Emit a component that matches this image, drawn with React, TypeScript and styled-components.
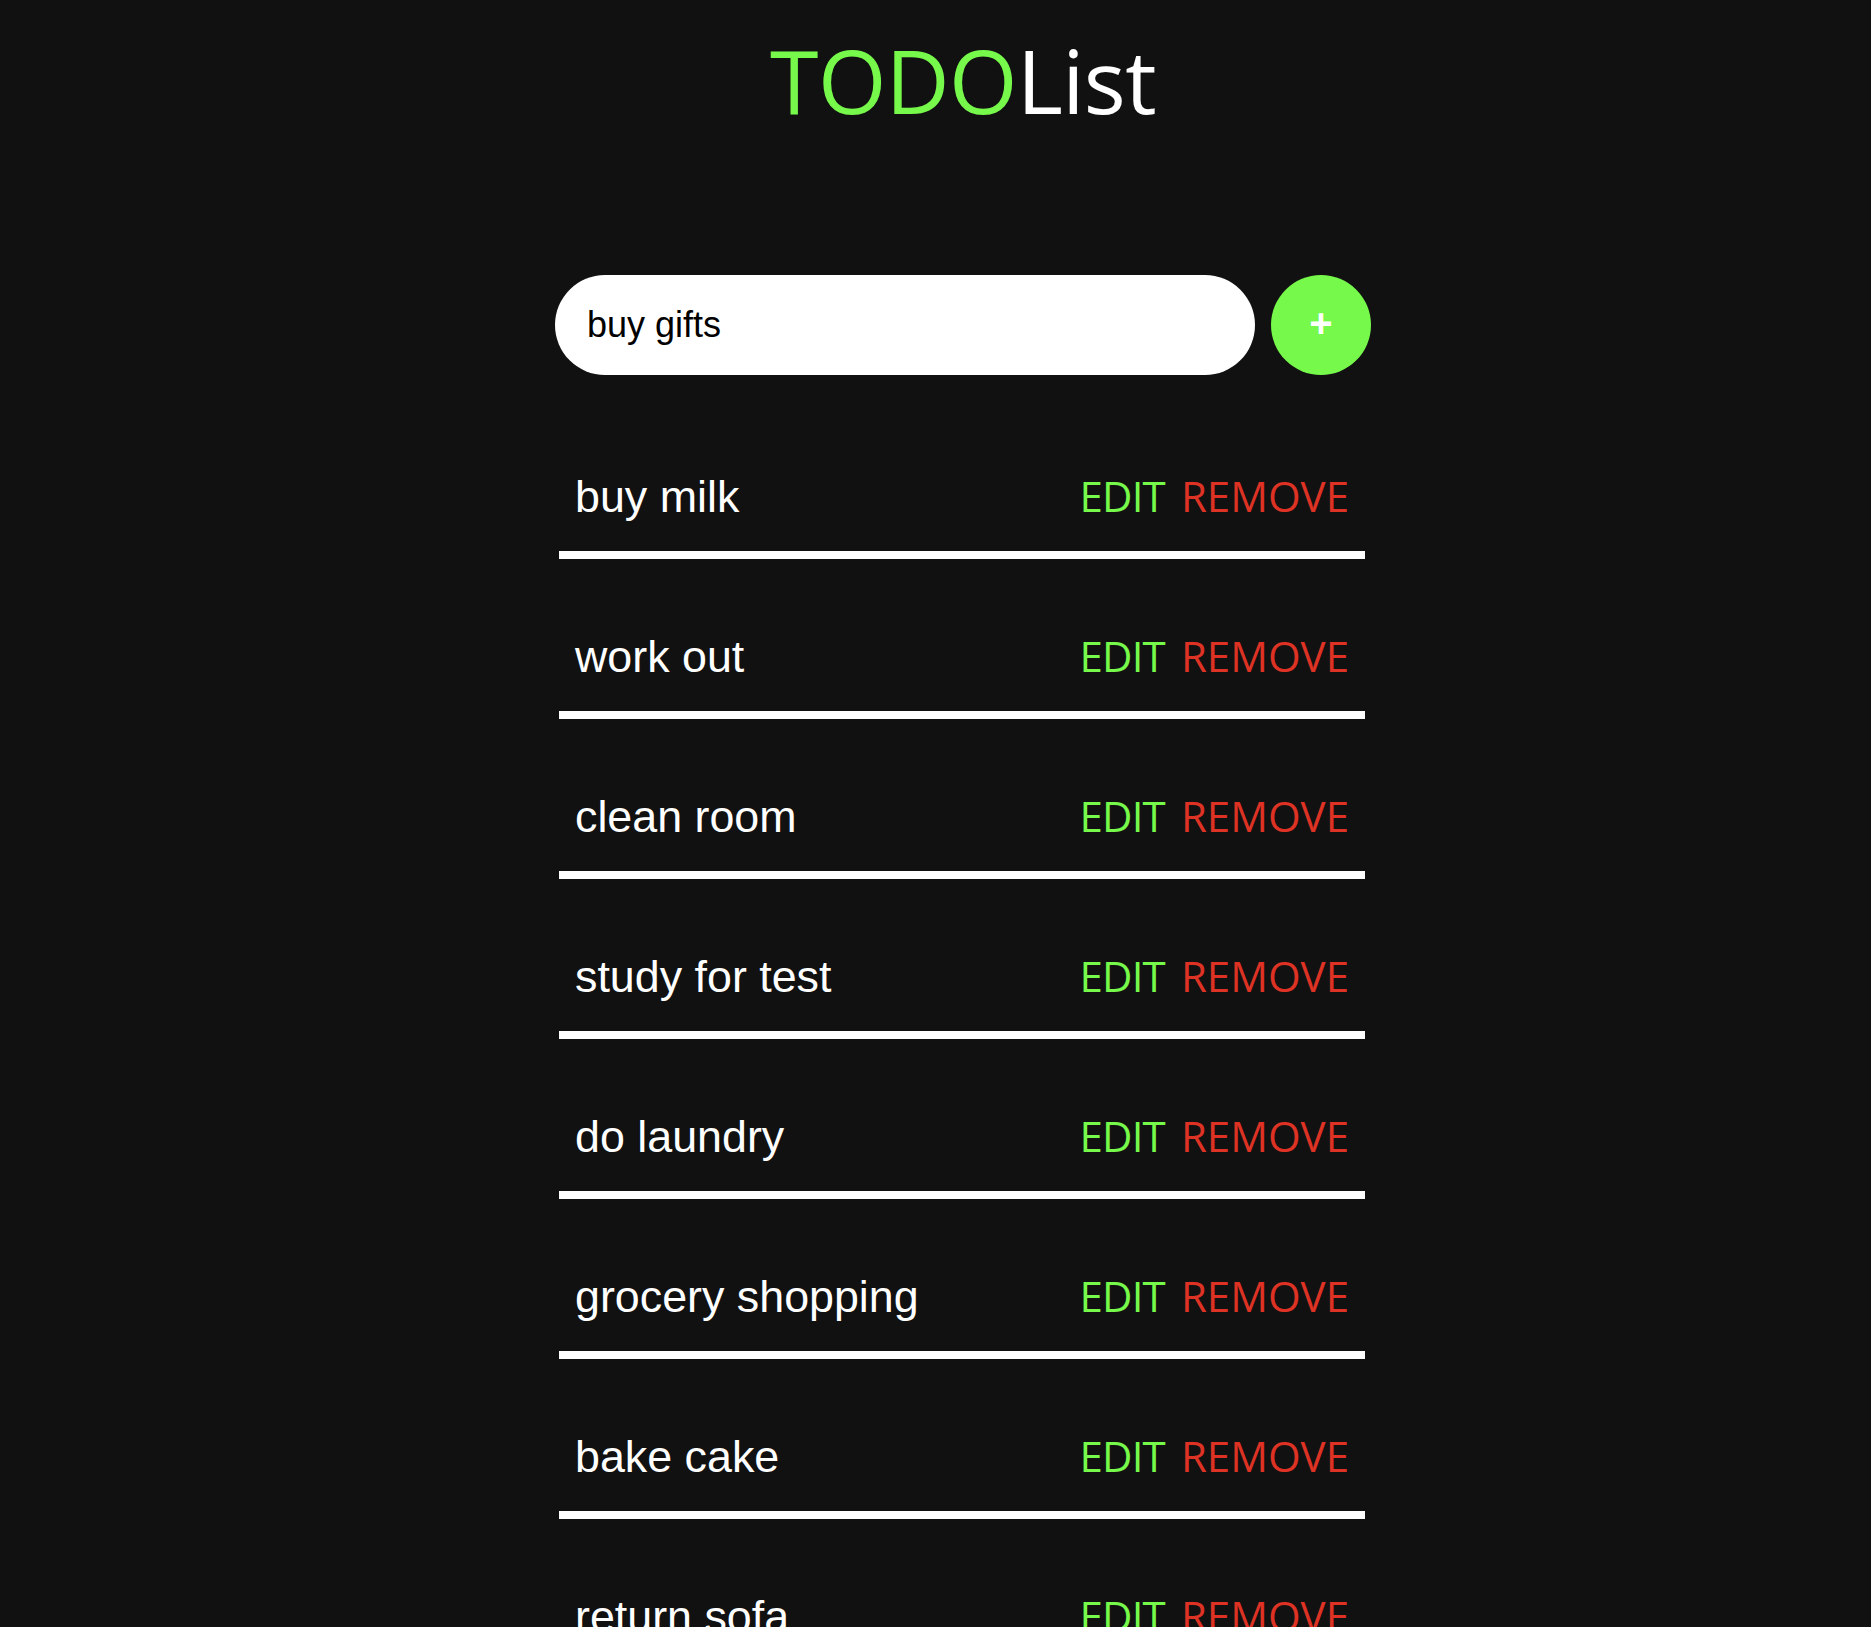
import React, { useState } from "react";
import styled, { createGlobalStyle } from "styled-components";

const Global = createGlobalStyle`
  html, body {
    margin: 0;
    padding: 0;
    background: #111111;
  }
`;

const Page = styled.div`
    min-height: 100vh;
    background: #111111;
    padding-left: 55px;
    display: flex;
    justify-content: center;
  `,
  Column = styled.div`
    width: 816px;
    display: flex;
    flex-direction: column;
  `,
  Title = styled.h1`
    margin: 30px 0 0;
    text-align: center;
    font-family: "Open Sans", sans-serif;
    font-weight: 500;
    font-size: 88px;
    line-height: 100px;
    letter-spacing: -0.6px;
    color: #ffffff;
  `,
  Accent = styled.span`
    color: #76f94b;
  `,
  Form = styled.form`
    display: flex;
    gap: 16px;
    margin-top: 145px;
  `,
  Input = styled.input`
    width: 700px;
    height: 100px;
    box-sizing: border-box;
    border: none;
    outline: none;
    border-radius: 50px;
    padding: 0 32px;
    background: #ffffff;
    color: #000000;
    font-family: "Liberation Sans", Arial, sans-serif;
    font-size: 36px;
  `,
  AddButton = styled.button`
    width: 100px;
    height: 100px;
    border: none;
    border-radius: 50%;
    background: #76f94b;
    color: #ffffff;
    font-family: "Liberation Sans", Arial, sans-serif;
    font-weight: 700;
    font-size: 40px;
    line-height: 1;
    display: flex;
    align-items: center;
    justify-content: center;
    padding: 0 0 4px;
    cursor: pointer;
  `,
  List = styled.ul`
    list-style: none;
    margin: 24px 0 0 4px;
    padding: 0;
    width: 806px;
  `,
  Row = styled.li`
    display: flex;
    align-items: center;
    justify-content: space-between;
    margin-top: 71px;
    padding: 0 16px 29px 16px;
    border-bottom: 8px solid #ffffff;
  `,
  Text = styled.span`
    font-family: "Liberation Sans", Arial, sans-serif;
    font-size: 44.8px;
    line-height: 52px;
    color: #ffffff;
  `,
  Actions = styled.div`
    display: flex;
    gap: 16px;
  `,
  Action = styled.button<{ danger?: boolean }>`
    border: none;
    background: none;
    padding: 0;
    font-family: "Open Sans", sans-serif;
    font-size: 42px;
    line-height: 52px;
    letter-spacing: ${({ danger }) => (danger ? "0" : "-0.8px")};
    color: ${({ danger }) => (danger ? "#dd3224" : "#76f94b")};
    cursor: pointer;
  `;

const initial = [
  "buy milk",
  "work out",
  "clean room",
  "study for test",
  "do laundry",
  "grocery shopping",
  "bake cake",
  "return sofa",
];

const App = () => {
  const [value, setValue] = useState<string>("buy gifts");
  const [todos, setTodos] = useState<string[]>(initial);

  const add = (e: React.FormEvent) => {
    e.preventDefault();
    if (!value.trim()) return;
    setTodos((prev) => [...prev, value.trim()]);
    setValue("");
  };

  return (
    <>
      <Global />
      <Page>
        <Column>
          <Title>
            <Accent>TODO</Accent>List
          </Title>
          <Form onSubmit={add}>
            <Input value={value} onChange={(e) => setValue(e.target.value)} />
            <AddButton type="submit">+</AddButton>
          </Form>
          <List>
            {todos.map((t, i) => (
              <Row key={t + i}>
                <Text>{t}</Text>
                <Actions>
                  <Action>EDIT</Action>
                  <Action
                    danger
                    onClick={() =>
                      setTodos((prev) => prev.filter((_, j) => j !== i))
                    }
                  >
                    REMOVE
                  </Action>
                </Actions>
              </Row>
            ))}
          </List>
        </Column>
      </Page>
    </>
  );
};

export default App;
